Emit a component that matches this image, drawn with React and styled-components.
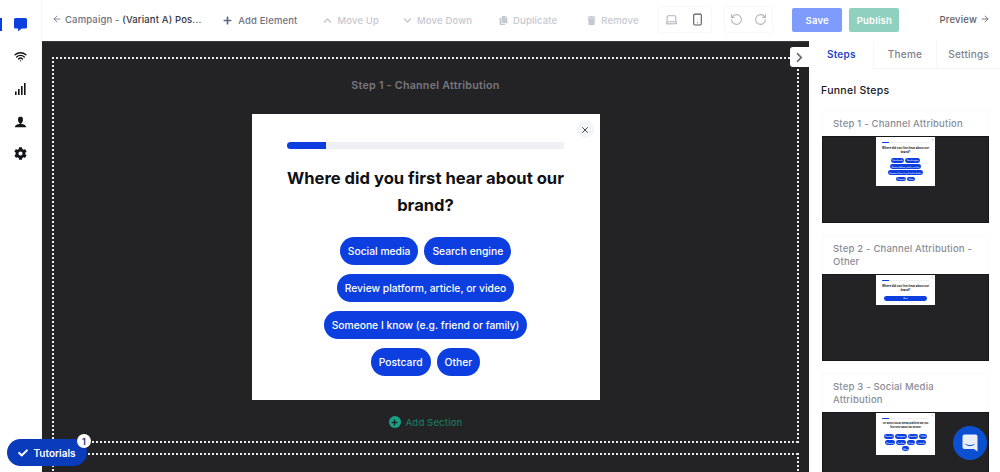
import React from "react";
import styled, { createGlobalStyle } from "styled-components";
import { FaCommentAlt, FaCog, FaPlus, FaChevronUp, FaChevronDown, FaCopy, FaTrash, FaCheck, FaChevronRight } from "react-icons/fa";
import { ImUser } from "react-icons/im";
import { LuLaptop, LuSmartphone, LuRotateCcw, LuRotateCw, LuArrowLeft, LuArrowRight, LuX, LuWifi } from "react-icons/lu";

const GlobalStyle = createGlobalStyle`
  html, body { margin: 0; padding: 0; background: #fff; }
  * { box-sizing: border-box; }
  body { font-family: Inter, "Liberation Sans", sans-serif; }
`;

const Page = styled.div`
  position: relative;
  width: 1000px;
  height: 472px;
  overflow: hidden;
  display: grid;
  grid-template-columns: 42px 767px 191px;
  grid-template-rows: 41px 431px;
  grid-template-areas: "nav top top" "nav canvas side";
`;

const Nav = styled.nav`
  grid-area: nav;
  display: flex;
  flex-direction: column;
  padding-top: 18px;
  gap: 19.3px;
  border-right: 1px solid #f6f6f8;
`;
const NavItem = styled.div`
  height: 13px;
  display: flex;
  align-items: center;
  justify-content: center;
  padding-right: 3px;
  font-size: 13px;
  color: ${(p) => (p.$active ? "#0d3fe0" : "#14151a")};
  border-left: 2px solid ${(p) => (p.$active ? "#0d3fe0" : "transparent")};
`;

const TopBar = styled.header`
  grid-area: top;
  display: flex;
  align-items: center;
  padding: 0 10px 0 10px;
  font-size: 9.5px;
  font-weight: 500;
`;
const Back = styled.div`
  width: 174px;
  display: flex;
  align-items: center;
  gap: 3px;
  margin-top: -3px;
  white-space: nowrap;
  letter-spacing: 0.15px;
  color: #70727e;
  b { font-weight: 500; color: #33343c; }
`;
const Tool = styled.div`
  display: flex;
  align-items: center;
  gap: ${(p) => (p.$on ? 6 : 5)}px;
  margin-right: ${(p) => p.$gap}px;
  white-space: nowrap;
  letter-spacing: 0.15px;
  color: ${(p) => (p.$on ? "#6f7280" : "#c6c8cf")};
  svg { font-size: 9px; color: ${(p) => (p.$on ? "#5d6685" : "#c6c8cf")}; }
`;
const IconGroup = styled.div`
  width: ${(p) => p.$w}px;
  height: 27px;
  margin-right: ${(p) => p.$gap}px;
  margin-top: -2px;
  display: flex;
  align-items: center;
  justify-content: space-around;
  border: 1px solid #f8f8fa;
  border-radius: 3px;
  font-size: 13px;
  color: #b4b6bd;
`;
const ActionButton = styled.button`
  width: 51px;
  height: 24px;
  margin-right: ${(p) => p.$gap}px;
  margin-top: -1px;
  border: 0;
  border-radius: 2px;
  padding: 0;
  font: 600 9.5px Inter, sans-serif;
  letter-spacing: 0.2px;
  color: #fff;
  background: ${(p) => p.$bg};
`;
const Preview = styled.div`
  display: flex;
  align-items: center;
  gap: 3px;
  margin-top: -3px;
  letter-spacing: 0.2px;
  color: #5c5e68;
`;

const Canvas = styled.main`
  grid-area: canvas;
  background: #232325;
  border-top: 1px solid #3a3a3d;
  padding: 15px 10px 0 10px;
  display: flex;
  flex-direction: column;
  gap: 10px;
  overflow: hidden;
`;
const dashH = "repeating-linear-gradient(90deg, #ececec 0 2.5px, transparent 2.5px 4px)";
const dashV = "repeating-linear-gradient(180deg, #ececec 0 2.5px, transparent 2.5px 4px)";
const Section = styled.section`
  flex: none;
  height: ${(p) => p.$h}px;
  padding: 2px;
  background:
    ${dashH} top / 100% 2px no-repeat,
    ${dashH} bottom / 100% 2px no-repeat,
    ${dashV} left / 2px 100% no-repeat,
    ${dashV} right / 2px 100% no-repeat;
  display: flex;
  flex-direction: column;
  align-items: center;
`;
const StepLabel = styled.div`
  margin-top: 19px;
  height: 16px;
  line-height: 16px;
  font-size: 10.7px;
  font-weight: 600;
  letter-spacing: 0.25px;
  color: #77787e;
`;
const AddSection = styled.div`
  margin-top: 16px;
  display: flex;
  align-items: center;
  gap: 5px;
  font-size: 9.5px;
  font-weight: 500;
  letter-spacing: 0.15px;
  color: #17785f;
`;
const PlusDot = styled.span`
  width: 12px;
  height: 12px;
  border-radius: 50%;
  background: #16a384;
  display: flex;
  align-items: center;
  justify-content: center;
  font-size: 7px;
  color: #232325;
`;

const Card = styled.div`
  position: relative;
  flex: none;
  width: 348px;
  margin-top: 20px;
  padding: 28px 36px 24px;
  background: #fff;
  display: flex;
  flex-direction: column;
  align-items: center;
`;
const Close = styled.span`
  position: absolute;
  top: 7px;
  right: 6px;
  width: 17px;
  height: 17px;
  border-radius: 50%;
  background: #f4f5f8;
  display: flex;
  align-items: center;
  justify-content: center;
  font-size: 10px;
  color: #25262c;
`;
const Track = styled.div`
  width: 277px;
  height: 7px;
  border-radius: 4px 0 0 4px;
  background: #f0f0f4;
`;
const Fill = styled.div`
  width: 39px;
  height: 7px;
  border-radius: 4px 0 0 4px;
  background: #0d3fe0;
`;
const Question = styled.h2`
  margin: 16px -4px 18px;
  font-size: ${(p) => p.$size || 16.6}px;
  font-weight: 700;
  line-height: 27px;
  text-align: center;
  color: #101116;
`;
const Options = styled.div`
  display: flex;
  flex-wrap: wrap;
  justify-content: center;
  gap: 9px 6px;
  width: ${(p) => p.$w || 236}px;
`;
const Option = styled.button`
  height: 28px;
  width: ${(p) => (p.$wide ? "100%" : "auto")};
  padding: 0 8px;
  border: 0;
  border-radius: 14px;
  white-space: nowrap;
  font: 500 10.3px Inter, sans-serif;
  color: #fff;
  background: #0d3fe0;
`;

const Side = styled.aside`
  grid-area: side;
  display: flex;
  flex-direction: column;
  overflow: hidden;
`;
const Tabs = styled.div`
  display: flex;
  height: 28px;
  flex: none;
`;
const Tab = styled.div`
  flex: 1;
  display: flex;
  align-items: center;
  justify-content: center;
  padding-bottom: 2px;
  font-size: 10px;
  font-weight: ${(p) => (p.$active ? 600 : 500)};
  letter-spacing: 0.25px;
  color: ${(p) => (p.$active ? "#1f46c9" : "#7f818c")};
  border-left: 1px solid ${(p) => (p.$active ? "transparent" : "#f5f5f8")};
  border-bottom: 1px solid ${(p) => (p.$active ? "transparent" : "#f5f5f8")};
`;
const SideTitle = styled.div`
  margin: 15px 0 12px 12px;
  font-size: 10.5px;
  line-height: 14px;
  font-weight: 500;
  letter-spacing: 0.3px;
  color: #17181d;
`;
const StepList = styled.div`
  display: flex;
  flex-direction: column;
  gap: 12px;
  padding: 0 11px 0 13px;
`;
const StepCard = styled.div`
  flex: none;
`;
const StepName = styled.div`
  padding: 6px 6px 6px 10px;
  line-height: 13px;
  font-size: 9.5px;
  font-weight: 500;
  letter-spacing: 0.2px;
  color: #8b8d96;
  border: 1px solid #fafafb;
  border-bottom: 0;
`;
const Thumb = styled.div`
  height: 87px;
  background: #232325;
  border: 1px solid #17171a;
  display: flex;
  justify-content: center;
  align-items: flex-start;
  overflow: hidden;
`;
const Mini = styled.div`
  zoom: 0.17;
  ${Card} { margin-top: 0; }
`;

const Toggle = styled.div`
  position: absolute;
  left: 790px;
  top: 47px;
  width: 19px;
  height: 20px;
  border-radius: 3px 0 0 3px;
  background: #fff;
  display: flex;
  align-items: center;
  justify-content: center;
  font-size: 11px;
  color: #6a6b70;
`;
const Tutorials = styled.div`
  position: absolute;
  left: 7px;
  top: 439px;
  width: 80px;
  height: 27px;
  border-radius: 14px;
  background: #0a3bbb;
  display: flex;
  align-items: center;
  justify-content: center;
  gap: 5px;
  font-size: 10px;
  font-weight: 600;
  color: #fff;
  svg { font-size: 10px; }
`;
const Badge = styled.span`
  position: absolute;
  left: 70px;
  top: -5px;
  width: 14px;
  height: 14px;
  border-radius: 50%;
  background: #fff;
  display: flex;
  align-items: center;
  justify-content: center;
  font-size: 9px;
  color: #0b2a7a;
`;
const ChatBubble = styled.div`
  position: absolute;
  left: 953px;
  top: 426px;
  width: 34px;
  height: 34px;
  border-radius: 50%;
  background: #0b50d0;
  display: flex;
  align-items: center;
  justify-content: center;
`;

const SignalIcon = () => (
  <svg width="11" height="12" viewBox="0 0 11 12" fill="currentColor">
    <rect x="0" y="8.5" width="1.6" height="3.5" />
    <rect x="3" y="6" width="1.6" height="6" />
    <rect x="6" y="3" width="1.6" height="9" />
    <rect x="9" y="0" width="1.6" height="12" />
  </svg>
);

const QuestionCard = ({ title, options, wide, width, titleSize }) => (
  <Card>
    <Close><LuX /></Close>
    <Track><Fill /></Track>
    <Question $size={titleSize}>{title}</Question>
    <Options $w={width}>
      {options.map((o) => (
        <Option key={o} $wide={wide}>{o}</Option>
      ))}
    </Options>
  </Card>
);

const firstQuestion = "Where did you first hear about our brand?";
const firstOptions = [
  "Social media",
  "Search engine",
  "Review platform, article, or video",
  "Someone I know (e.g. friend or family)",
  "Postcard",
  "Other",
];

const steps = [
  { name: "Step 1 - Channel Attribution", title: firstQuestion, options: firstOptions },
  { name: "Step 2 - Channel Attribution - Other", title: firstQuestion, options: ["Next"], wide: true, width: 253 },
  {
    name: "Step 3 - Social Media Attribution",
    title: "On which social media platform did you first hear about our brand?",
    titleSize: 14,
    width: 270,
    options: ["Facebook", "Instagram", "Snapchat", "TikTok", "Pinterest", "YouTube", "Twitter", "LinkedIn", "Other"],
  },
];

const App = () => (
  <>
    <GlobalStyle />
    <Page>
      <Nav>
        <NavItem $active><FaCommentAlt /></NavItem>
        <NavItem><LuWifi strokeWidth={2.6} /></NavItem>
        <NavItem><SignalIcon /></NavItem>
        <NavItem><ImUser /></NavItem>
        <NavItem><FaCog /></NavItem>
      </Nav>

      <TopBar>
        <Back>
          <LuArrowLeft size={10} />
          <span>Campaign - <b>(Variant A) Pos...</b></span>
        </Back>
        <Tool $on $gap={26}><FaPlus />Add Element</Tool>
        <Tool $gap={24}><FaChevronUp />Move Up</Tool>
        <Tool $gap={27}><FaChevronDown />Move Down</Tool>
        <Tool $gap={30}><FaCopy />Duplicate</Tool>
        <Tool $gap={19}><FaTrash />Remove</Tool>
        <IconGroup $w={55} $gap={12}><LuLaptop /><LuSmartphone color="#55575f" /></IconGroup>
        <IconGroup $w={50} $gap={19}><LuRotateCcw /><LuRotateCw /></IconGroup>
        <ActionButton $bg="#7e9cfb" $gap={7}>Save</ActionButton>
        <ActionButton $bg="#8fd0bf" $gap={40}>Publish</ActionButton>
        <Preview>Preview<LuArrowRight size={10} /></Preview>
      </TopBar>

      <Canvas>
        <Section $h={386}>
          <StepLabel>Step 1 - Channel Attribution</StepLabel>
          <QuestionCard title={firstQuestion} options={firstOptions} />
          <AddSection><PlusDot><FaPlus /></PlusDot>Add Section</AddSection>
        </Section>
        <Section $h={200} />
      </Canvas>

      <Side>
        <Tabs>
          <Tab $active>Steps</Tab>
          <Tab>Theme</Tab>
          <Tab>Settings</Tab>
        </Tabs>
        <SideTitle>Funnel Steps</SideTitle>
        <StepList>
          {steps.map((s) => (
            <StepCard key={s.name}>
              <StepName>{s.name}</StepName>
              <Thumb>
                <Mini>
                  <QuestionCard title={s.title} options={s.options} wide={s.wide} width={s.width} titleSize={s.titleSize} />
                </Mini>
              </Thumb>
            </StepCard>
          ))}
        </StepList>
      </Side>

      <Toggle><FaChevronRight /></Toggle>
      <Tutorials>
        <FaCheck />Tutorials
        <Badge>1</Badge>
      </Tutorials>
      <ChatBubble>
        <svg width="16" height="18" viewBox="0 0 16 18">
          <path d="M2.5 0.5h11a2 2 0 0 1 2 2v15l-3.6-2.6H2.5a2 2 0 0 1-2-2v-10.4a2 2 0 0 1 2-2z" fill="#e9eefb" />
          <path d="M4 10.5c2.4 1.6 5.6 1.6 8 0" fill="none" stroke="#0b50d0" strokeWidth="1" strokeLinecap="round" />
        </svg>
      </ChatBubble>
    </Page>
  </>
);

export default App;
